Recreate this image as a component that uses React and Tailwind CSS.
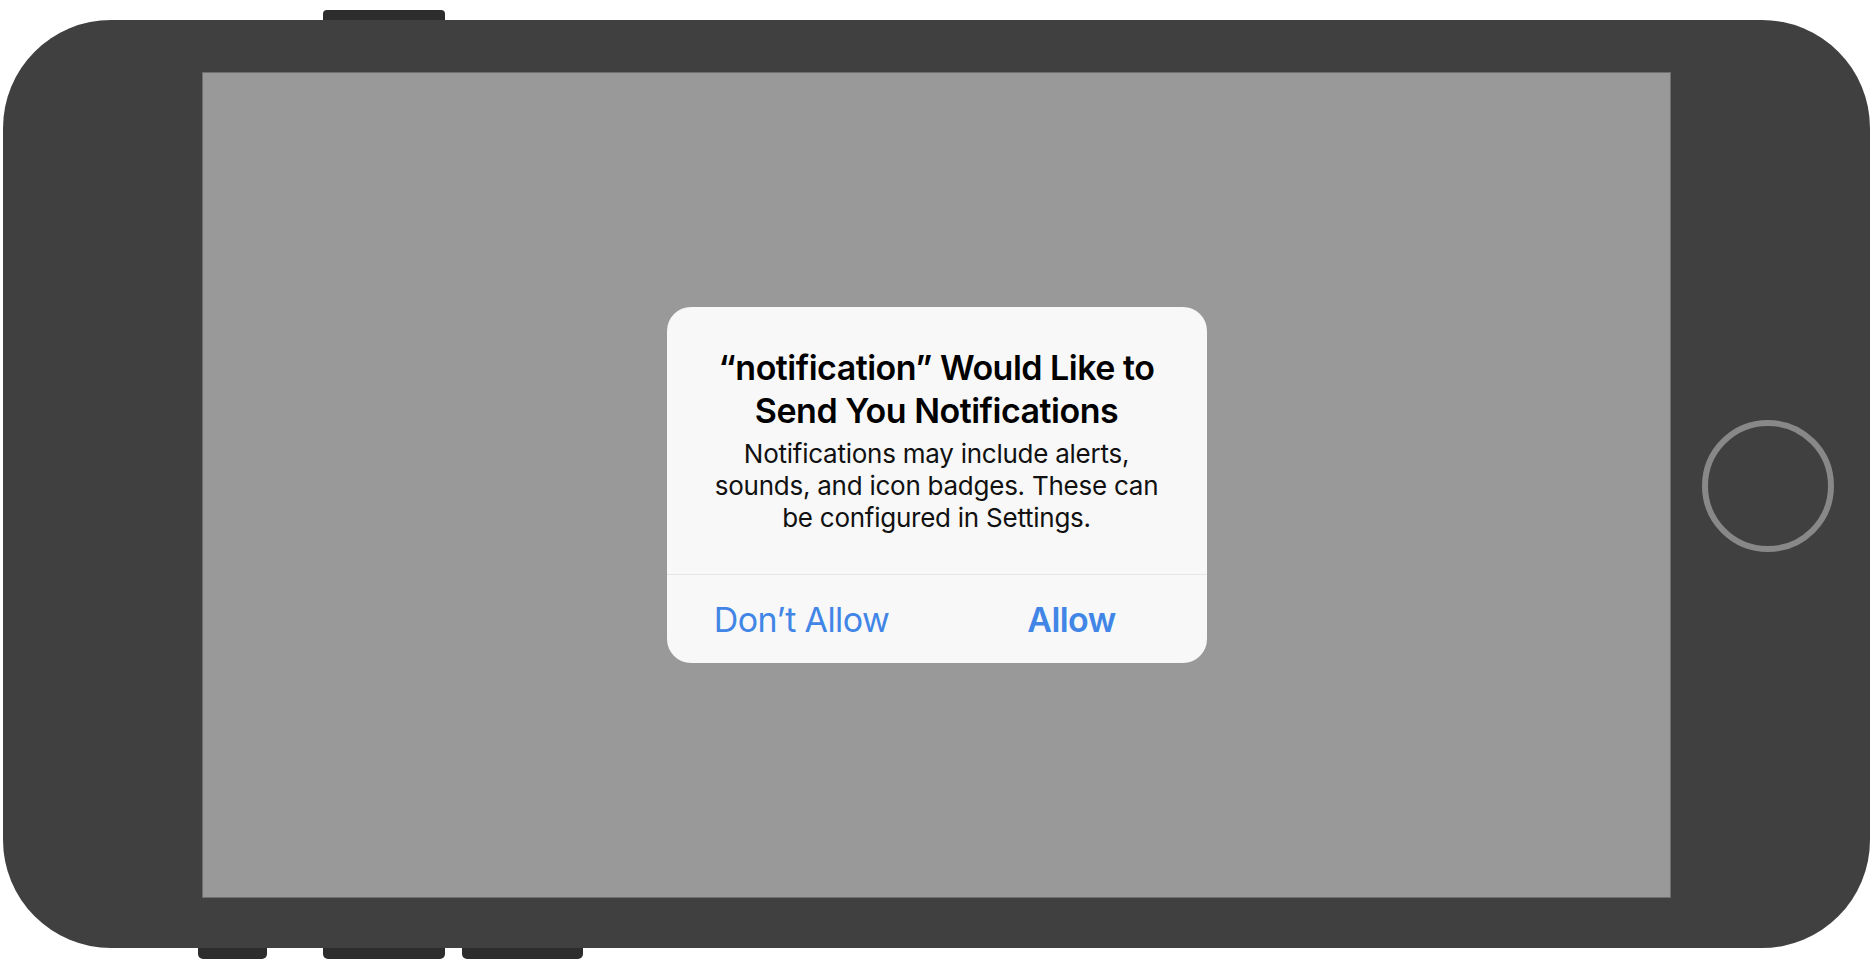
import React from 'react';

const font = { fontFamily: 'Inter, "Noto Sans", sans-serif' };

const AlertDialog = () => {
    return (
        <div className="w-[540px] rounded-[24px] bg-[#f8f8f8] flex flex-col overflow-hidden" style={font}>
            {/* title + message */}
            <div className="flex flex-col items-center text-center px-8 pt-[39px] h-[267px]">
                <p className="text-[34px] leading-[43px] font-semibold text-black tracking-[-0.5px]">
                    “notification” Would Like to<br />Send You Notifications
                </p>
                <p className="mt-[6px] text-[26px] leading-[32px] text-[#111] tracking-[-0.25px]">
                    Notifications may include alerts,<br />sounds, and icon badges. These can<br />be configured in Settings.
                </p>
            </div>
            <div className="h-px bg-[#e6e6e6]" />
            {/* actions */}
            <div className="flex h-[88px]">
                <button className="flex-1 flex items-center justify-center text-[34px] text-[#4186e6] tracking-[-0.6px]">
                    Don’t Allow
                </button>
                <button className="flex-1 flex items-center justify-center text-[34px] font-semibold text-[#4186e6] tracking-[-0.6px]">
                    Allow
                </button>
            </div>
        </div>
    );
};

const App = () => {
    return (
        <div className="w-[1872px] h-[970px] bg-white flex flex-col pt-[10px] pl-[3px]">
            {/* top side button */}
            <div className="flex h-[10px] pl-[320px]">
                <div className="w-[122px] h-[10px] rounded-t-[4px] bg-[#2d2d2d]" />
            </div>

            {/* device body */}
            <div className="w-[1867px] h-[928px] rounded-[108px] bg-[#404040] flex">
                <div className="w-[199px]" />
                <div className="flex flex-col">
                    <div className="h-[52px]" />
                    <div className="w-[1469px] h-[826px] bg-[#999999] border border-[#6e6e6e] flex items-center justify-center">
                        <AlertDialog />
                    </div>
                </div>
                <div className="flex-1 flex items-center justify-center pr-[5px] pt-[3px]">
                    <div className="w-[132px] h-[132px] rounded-full border-[6px] border-[#888888]" />
                </div>
            </div>

            {/* bottom side buttons */}
            <div className="flex h-[11px] pl-[195px]">
                <div className="w-[69px] h-[11px] rounded-b-[5px] bg-[#2d2d2d]" />
                <div className="w-[122px] h-[11px] rounded-b-[5px] bg-[#2d2d2d] ml-[56px]" />
                <div className="w-[121px] h-[11px] rounded-b-[5px] bg-[#2d2d2d] ml-[17px]" />
            </div>
        </div>
    );
};

export default App;
